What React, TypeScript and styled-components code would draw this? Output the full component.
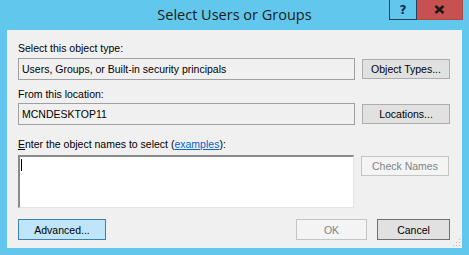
import styled, { createGlobalStyle } from "styled-components";

const GlobalStyle = createGlobalStyle`
  html, body {
    margin: 0;
    padding: 0;
    background: #62c7ec;
  }
  * {
    box-sizing: border-box;
  }
`;

const Window = styled.div`
  width: 469px;
  height: 255px;
  background: #62c7ec;
  display: flex;
  flex-direction: column;
  padding: 0 7px 7px 7px;
  font-family: "Liberation Sans", Arial, sans-serif;
  font-size: 10.5px;
  color: #000;
`;

const TitleBar = styled.div`
  height: 30px;
  position: relative;
  display: flex;
  align-items: center;
  justify-content: center;
`;

const TitleText = styled.div`
  font-family: "Open Sans", "Noto Sans", sans-serif;
  font-size: 14.5px;
  color: #1b1b1b;
  margin-top: -1px;
`;

const Caption = styled.div`
  position: absolute;
  top: 0;
  right: -1px;
  display: flex;
`;

const CaptionButton = styled.div<{ $close?: boolean }>`
  width: ${(p) => (p.$close ? "46px" : "28px")};
  height: 20px;
  display: flex;
  align-items: center;
  justify-content: center;
  background: ${(p) => (p.$close ? "#c75050" : "#62c7ec")};
  border: 1px solid ${(p) => (p.$close ? "#b04848" : "#24415e")};
  border-top: none;
  border-left: ${(p) => (p.$close ? "none" : undefined)};
  font-family: "DejaVu Sans", sans-serif;
  font-weight: bold;
  font-size: 12px;
  color: #102a4a;
`;

const Client = styled.div`
  flex: 1;
  background: #f0f0f0;
  position: relative;
  display: flex;
  flex-direction: column;
  padding: 0 12px 0 11px;
`;

const Label = styled.div<{ $top: number }>`
  height: 14px;
  line-height: 14px;
  margin-top: ${(p) => p.$top}px;
  white-space: nowrap;
`;

const Row = styled.div<{ $top: number; $align?: string; $gap?: number }>`
  display: flex;
  align-items: ${(p) => p.$align || "center"};
  gap: ${(p) => p.$gap ?? 7}px;
  margin-top: ${(p) => p.$top}px;
`;

const ReadBox = styled.div`
  width: 337px;
  height: 22px;
  border: 1px solid #a0a0a0;
  background: #f0f0f0;
  padding: 0 3px;
  display: flex;
  align-items: center;
  white-space: nowrap;
`;

const TextArea = styled.div`
  width: 336px;
  height: 53px;
  background: #fff;
  border-top: 2px solid #8a8a8a;
  border-left: 2px solid #8a8a8a;
  border-right: 1px solid #e3e3e3;
  border-bottom: 1px solid #e3e3e3;
  padding: 2px 1px;
`;

const Caret = styled.div`
  width: 1px;
  height: 12px;
  background: #000;
`;

const Button = styled.div<{ $w: number; $kind?: "hot" | "disabled" | "default"; $h?: number }>`
  width: ${(p) => p.$w}px;
  height: ${(p) => p.$h ?? 21}px;
  display: flex;
  align-items: center;
  justify-content: center;
  white-space: nowrap;
  background: ${(p) =>
    p.$kind === "hot" ? "#bfe5fb" : p.$kind === "disabled" ? "#f4f4f4" : "#e1e1e1"};
  border: 1px solid
    ${(p) =>
      p.$kind === "hot"
        ? "#3c7fb1"
        : p.$kind === "disabled"
        ? "#c5c5c5"
        : p.$kind === "default"
        ? "#707070"
        : "#adadad"};
  color: ${(p) => (p.$kind === "disabled" ? "#838383" : "#000")};
`;

const Spacer = styled.div`
  flex: 1;
`;

const Link = styled.span`
  color: #0066cc;
  text-decoration: underline;
`;

const Accel = styled.span`
  text-decoration: underline;
`;

const Grip = styled.svg`
  position: absolute;
  right: 1px;
  bottom: 1px;
`;

const CheckNamesWrap = styled.div`
  padding-top: 1px;
`;

export default function App() {
  return (
    <>
      <GlobalStyle />
      <Window>
        <TitleBar>
          <TitleText>Select Users or Groups</TitleText>
          <Caption>
            <CaptionButton>?</CaptionButton>
            <CaptionButton $close>
              <svg width="11" height="9" viewBox="0 0 11 9">
                <path d="M1.5 1 L9.5 8 M9.5 1 L1.5 8" stroke="#1a1a1a" strokeWidth="2.6" />
              </svg>
            </CaptionButton>
          </Caption>
        </TitleBar>
        <Client>
          <Label $top={11}>Select this object type:</Label>
          <Row $top={3}>
            <ReadBox>Users, Groups, or Built-in security principals</ReadBox>
            <Button $w={88} $h={20}>Object Types...</Button>
          </Row>
          <Label $top={7}>From this location:</Label>
          <Row $top={2}>
            <ReadBox>MCNDESKTOP11</ReadBox>
            <Button $w={88} $h={20}>Locations...</Button>
          </Row>
          <Label $top={12}>
            <Accel>E</Accel>nter the object names to select (<Link>examples</Link>):
          </Label>
          <Row $top={4} $align="flex-start">
            <TextArea>
              <Caret />
            </TextArea>
            <CheckNamesWrap>
              <Button $w={88} $h={20} $kind="disabled">Check Names</Button>
            </CheckNamesWrap>
          </Row>
          <Row $top={11} $gap={10}>
            <Button $w={88} $kind="hot">Advanced...</Button>
            <Spacer />
            <Button $w={71} $kind="disabled">OK</Button>
            <Button $w={73} $kind="default">Cancel</Button>
          </Row>
          <Grip width="10" height="10" viewBox="0 0 10 10">
            {[
              [8, 2],
              [5, 5],
              [8, 5],
              [2, 8],
              [5, 8],
              [8, 8],
            ].map(([x, y], i) => (
              <rect key={i} x={x} y={y} width="1" height="1" fill="#b8b8b8" />
            ))}
          </Grip>
        </Client>
      </Window>
    </>
  );
}
